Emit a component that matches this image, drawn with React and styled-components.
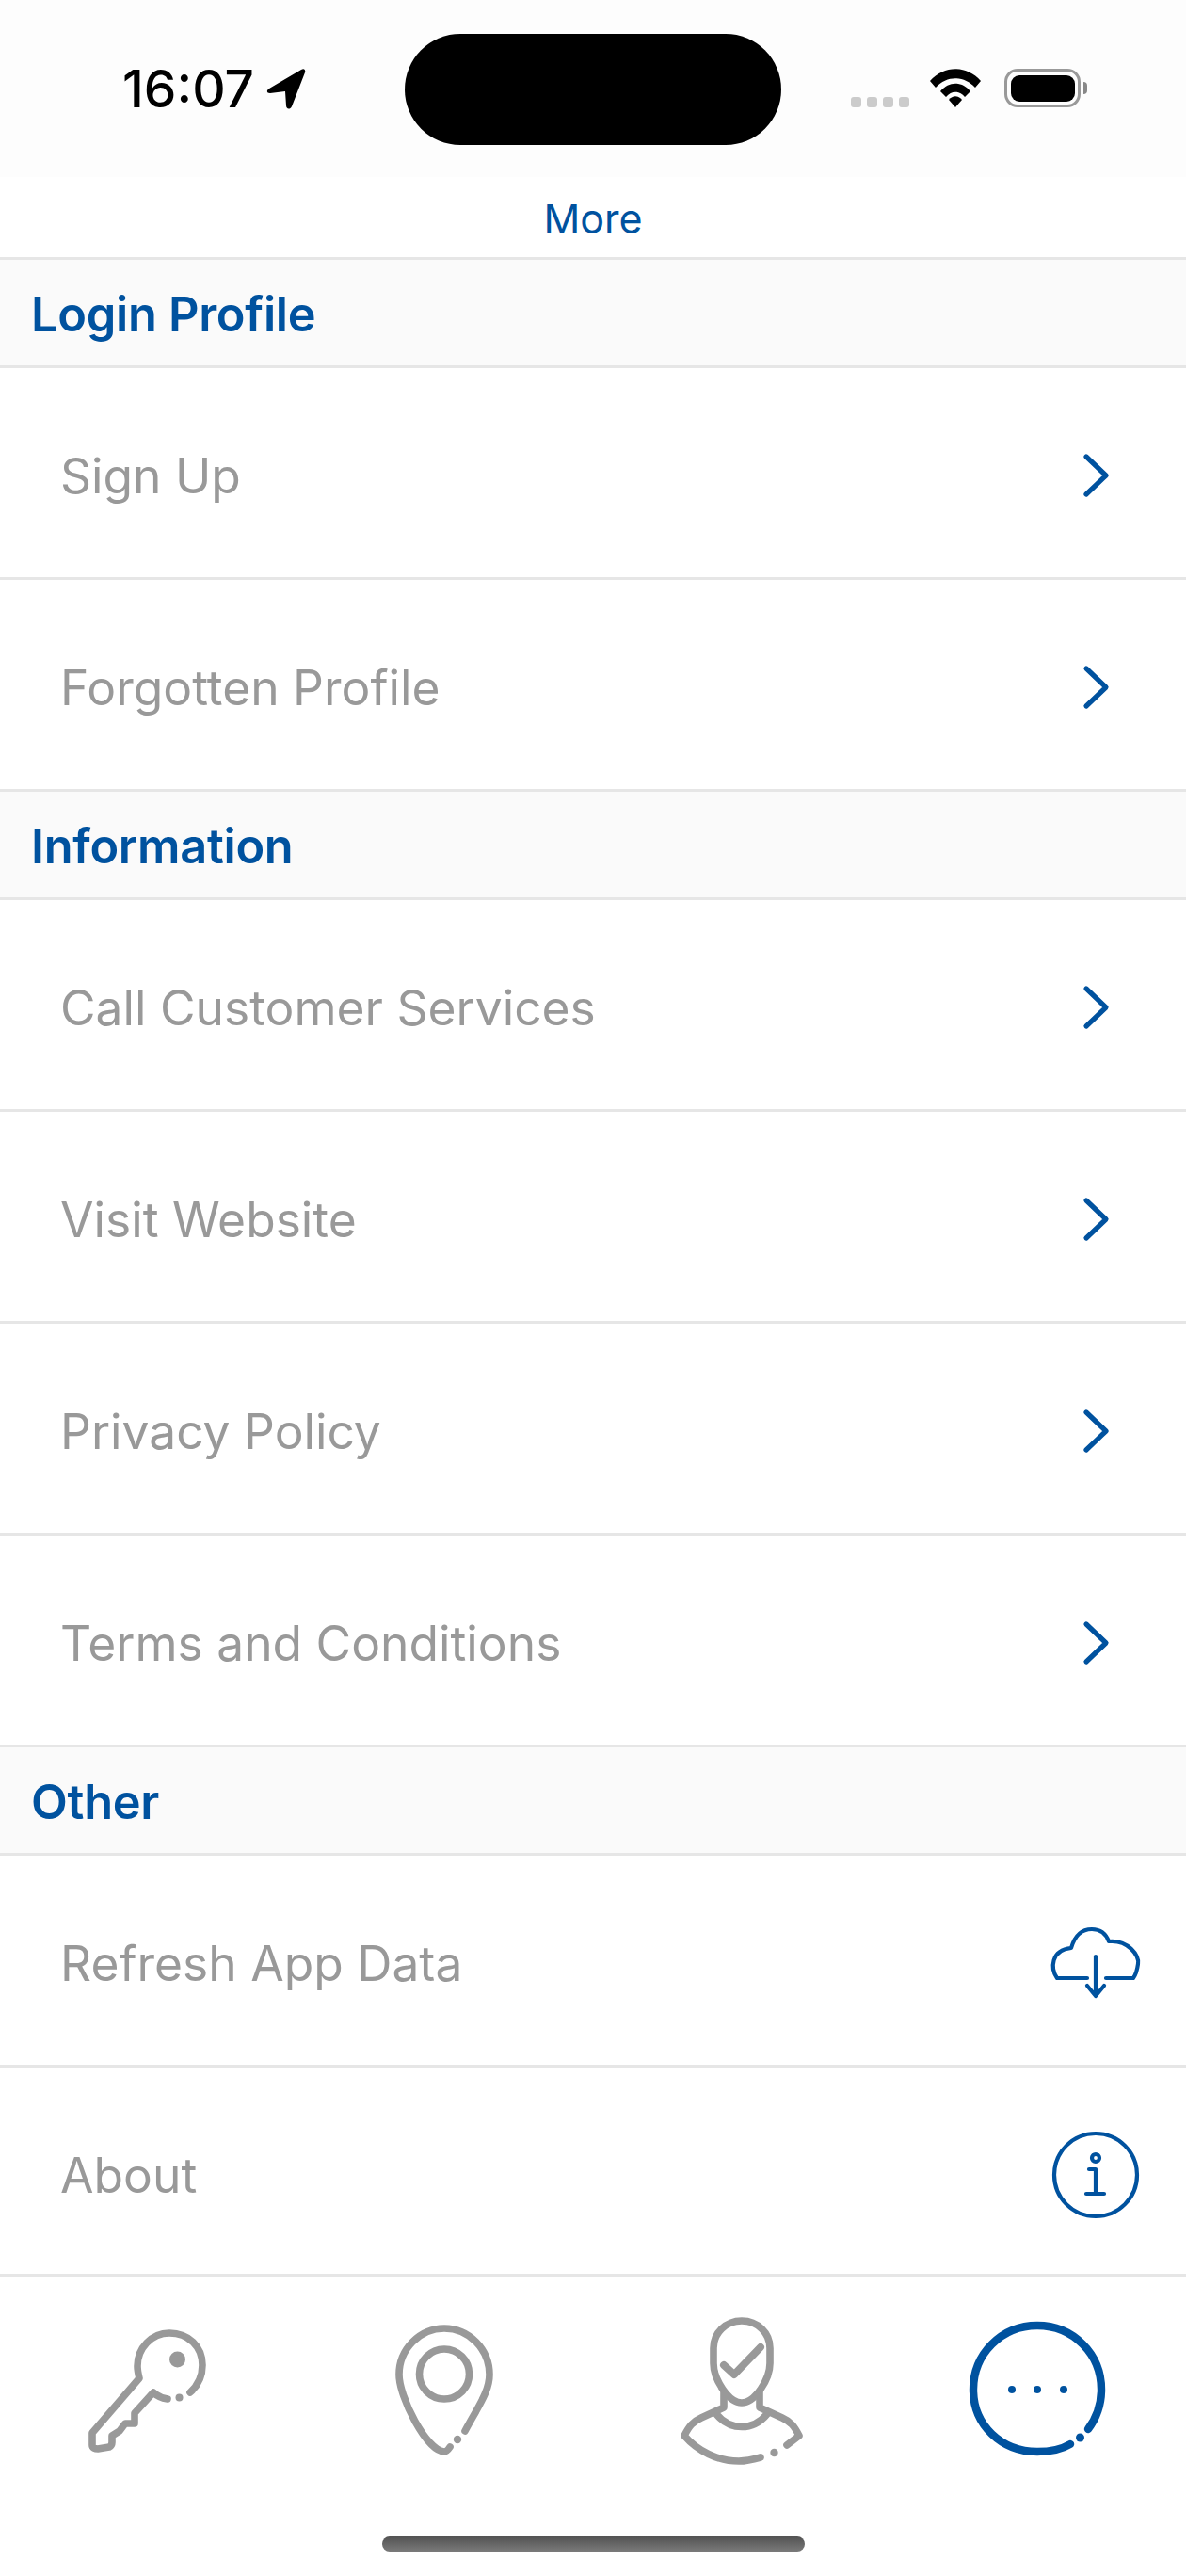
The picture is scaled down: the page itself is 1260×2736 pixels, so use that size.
import React from "react";
import styled, { createGlobalStyle } from "styled-components";

const Global = createGlobalStyle`
  html, body { margin: 0; padding: 0; background: #fff; }
  * { box-sizing: border-box; }
`;
const BLUE = "#00529f";
const GREY = "#999999";

const Page = styled.div`
  width: 1260px; height: 2736px; display: flex; flex-direction: column;
  font-family: Inter, "Liberation Sans", sans-serif; background: #fff; overflow: hidden;
`;
const StatusBar = styled.div`
  height: 188px; flex: none; background: #fdfdfd; display: grid; grid-template-columns: 430px 400px 1fr; padding-top: 36px;
`;
const Clock = styled.div`
  display: flex; align-items: flex-start; padding: 30px 0 0 130px; gap: 13px;
  font-size: 55px; line-height: 56px; font-weight: 500; color: #000;
`;
const Island = styled.div`width: 400px; height: 118px; border-radius: 59px; background: #000;`;
const StatusRight = styled.div`
  display: flex; align-items: flex-start; padding: 37px 0 0 74px;
`;
const Signal = styled.div`display: flex; gap: 6px; margin: 30px 22px 0 0;`;
const SignalDot = styled.span`width: 11px; height: 11px; border-radius: 3px; background: #cbcbcb;`;
const Battery = styled.div`
  position: relative; margin-left: 25px; width: 81px; height: 41px; border: 3.5px solid #999; border-radius: 14px; padding: 3.5px;
  &::after { content: ""; position: absolute; right: -10px; top: 11px; width: 4px; height: 13px; background: #888; border-radius: 0 6px 6px 0; }
`;
const BatteryFill = styled.div`width: 100%; height: 100%; background: #000; border-radius: 9px;`;
const NavBar = styled.div`
  height: 88px; flex: none; display: flex; align-items: center; justify-content: center;
  color: ${BLUE}; font-size: 43px; padding-top: 2px; background: #fff; border-bottom: 3px solid #e6e6e6;
`;
const SectionHeader = styled.div`
  height: 115px; background: #fafafa; border-bottom: 3px solid #e6e6e6;
  display: flex; align-items: center; padding: 2px 0 0 33px; color: ${BLUE}; font-size: 50.5px; font-weight: 600; letter-spacing: -0.3px;
`;
const Row = styled.div`
  height: 225px; border-bottom: 3px solid #e6e6e6; display: flex; align-items: center; justify-content: space-between;
  padding: 5px 0 0 64px; color: ${GREY}; font-size: 51.5px; background: #fff;
`;
const IconSlot = styled.div`width: 192px; display: flex; justify-content: center; color: ${BLUE};`;
const ChevronSlot = styled.div`width: 110px; display: flex; color: ${BLUE};`;
const Content = styled.div`flex: 1 1 0; min-height: 0; overflow: hidden;`;
const TabBar = styled.div`
  height: 321px; flex: none; border-top: 3px solid #e6e6e6; background: #fff; display: flex; flex-direction: column;
`;
const Tabs = styled.div`height: 276px; flex: none; display: grid; grid-template-columns: repeat(4, 315px);`;
const Tab = styled.div`display: flex;`;
const HomeIndicator = styled.div`
  align-self: center; width: 449px; height: 16px; border-radius: 8px; background: linear-gradient(#525252, #7a7a7a);
`;
const Svg = styled.svg`display: block; fill: none; stroke: currentColor; stroke-linecap: round; stroke-linejoin: round;`;

const Chevron = () => (
  <Svg width="30" height="48" viewBox="0 0 30 48" strokeWidth="5.2">
    <path d="M4 4 L25 24 L4 44" />
  </Svg>
);
const Cloud = () => (
  <Svg width="100" height="80" viewBox="1114 2046 100 80" strokeWidth="4.2">
    <path d="M1155 2102H1123C1116 2092 1116 2072 1138 2070C1142 2056 1150 2050 1160 2050C1169 2050 1175 2055 1178 2063C1198 2061 1211 2078 1209 2087C1208 2094 1207 2098 1204 2102H1175" />
    <path d="M1164 2079V2121M1155 2110L1164 2121L1173 2110" />
  </Svg>
);
const Info = () => (
  <Svg width="96" height="96" viewBox="1116 2260 96 96" strokeWidth="4.2">
    <circle cx="1164" cy="2308" r="44" />
    <circle cx="1164" cy="2290" r="4" />
    <path d="M1157 2302H1164V2328M1154 2328H1173" />
  </Svg>
);
const TabSvg = styled(Svg)`color: ${(p) => (p.$active ? BLUE : GREY)};`;
const Key = () => (
  <TabSvg width="315" height="276" viewBox="0 2418 315 276" strokeWidth="7.6">
    <path d="M202 2541C211 2533 215 2523 215 2512C215 2492 200 2478 180 2478C161 2478 146 2494 146 2513C146 2517 147 2522 148 2526L98 2584V2597C98 2600 101 2601 104 2601L116 2599C118 2598 119 2597 119 2594V2587L127 2582L133 2574H143V2563L163 2541C167 2545 172 2547 178 2548" />
    <circle cx="190.5" cy="2546.5" r="4" fill="currentColor" stroke="none" />
    <ellipse cx="188.5" cy="2506" rx="8.5" ry="8.5" fill="currentColor" stroke="none" />
  </TabSvg>
);
const Pin = () => (
  <TabSvg width="315" height="276" viewBox="315 2418 315 276" strokeWidth="7.6">
    <path d="M494 2582C508 2556 520 2540 520 2522C520 2495 498 2473 472 2473C446 2473 424 2495 424 2522C424 2546 453 2603 472 2604C474 2604 476 2602 478 2599" />
    <circle cx="472" cy="2521.5" r="26.5" />
    <circle cx="486" cy="2591" r="4.2" fill="currentColor" stroke="none" />
  </TabSvg>
);
const Person = () => (
  <TabSvg width="315" height="276" viewBox="630 2418 315 276" strokeWidth="7.6">
    <path d="M788 2465C771 2465 758 2478 758 2494V2510C758 2527 774 2552 788 2552C802 2552 818 2527 818 2510V2494C818 2478 805 2465 788 2465Z" />
    <path d="M769 2541V2557L745 2568C736 2572 732 2577 727 2587C741 2603 762 2614 785 2614C793 2614 801 2612 808 2610" />
    <path d="M807 2541V2557L831 2568C840 2572 844 2577 849 2587L836 2597" />
    <path d="M761 2564C776 2582 800 2582 815 2564" />
    <path d="M769 2512L780 2522L808 2493" strokeWidth="8" />
    <circle cx="822.5" cy="2605" r="4.2" fill="currentColor" stroke="none" />
  </TabSvg>
);
const MoreIcon = () => (
  <TabSvg $active width="315" height="276" viewBox="945 2418 315 276" strokeWidth="8.4">
    <path d="M1156 2580C1165 2568 1170 2553 1170 2538C1170 2500 1140 2470 1102 2470C1064 2470 1034 2500 1034 2538C1034 2576 1064 2604 1102 2604C1115 2604 1127 2602 1137 2596" />
    <circle cx="1147.5" cy="2589" r="4.5" fill="currentColor" stroke="none" />
    <circle cx="1075" cy="2538" r="4" fill="currentColor" stroke="none" />
    <circle cx="1102" cy="2538" r="4" fill="currentColor" stroke="none" />
    <circle cx="1130" cy="2538" r="4" fill="currentColor" stroke="none" />
  </TabSvg>
);

const Section = ({ title, items }) => (
  <>
    <SectionHeader>{title}</SectionHeader>
    {items.map(([label, icon]) => (
      <Row key={label}>
        <span>{label}</span>
        {icon ? <IconSlot>{icon}</IconSlot> : <ChevronSlot><Chevron /></ChevronSlot>}
      </Row>
    ))}
  </>
);

export default function App() {
  return (
    <Page>
      <Global />
      <StatusBar>
        <Clock>
          16:07
          <svg width="42" height="44" viewBox="0 0 42 44" style={{ marginTop: 6 }}>
            <path d="M3 22L37 2C40 0 42 2 41 5L27 41C25 45 21 44 21 40L20 25L4 27C0 27 0 24 3 22Z" fill="#000" />
          </svg>
        </Clock>
        <Island />
        <StatusRight>
          <Signal>{[0, 1, 2, 3].map((i) => <SignalDot key={i} />)}</Signal>
          <svg width="54" height="41" viewBox="0 0 54 41" fill="#000">
            <path d="M0 13C15 -4 39 -4 54 13L48 20C36 7 18 7 6 20Z" />
            <path d="M11 24C20 13 34 13 43 24L37 30C31 23 23 23 17 30Z" />
            <path d="M20 33C24 28 30 28 34 33L27 41Z" />
          </svg>
          <Battery><BatteryFill /></Battery>
        </StatusRight>
      </StatusBar>
      <NavBar>More</NavBar>
      <Content>
        <Section title="Login Profile" items={[["Sign Up"], ["Forgotten Profile"]]} />
        <Section title="Information" items={[["Call Customer Services"], ["Visit Website"], ["Privacy Policy"], ["Terms and Conditions"]]} />
        <Section title="Other" items={[["Refresh App Data", <Cloud />], ["About", <Info />]]} />
      </Content>
      <TabBar>
        <Tabs>
          <Tab><Key /></Tab>
          <Tab><Pin /></Tab>
          <Tab><Person /></Tab>
          <Tab><MoreIcon /></Tab>
        </Tabs>
        <HomeIndicator />
      </TabBar>
    </Page>
  );
}
